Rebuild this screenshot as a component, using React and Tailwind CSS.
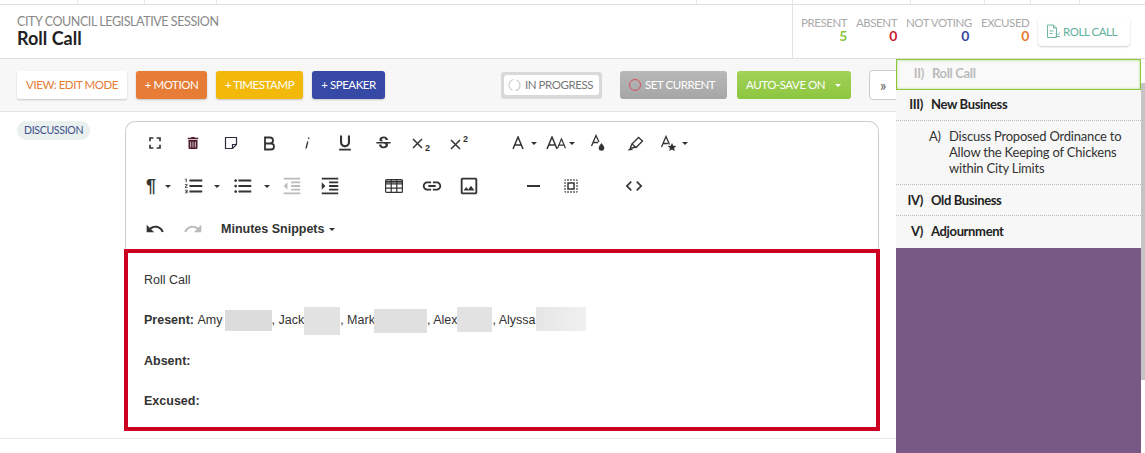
import {
  MdFullscreen, MdFormatUnderlined, MdStrikethroughS,
  MdFormatListNumbered, MdFormatListBulleted, MdFormatIndentDecrease, MdFormatIndentIncrease,
  MdLink, MdOutlineImage, MdSelectAll, MdCode, MdUndo, MdRedo,
} from 'react-icons/md';
import { FaTrashAlt } from 'react-icons/fa';

const tabStops = ['w-[78px]', 'w-[67px]', 'w-[72px]', 'w-[480px]', 'w-[96px]', 'w-[118px]', 'w-[74px]', 'w-[46px]', 'w-[49px]'];

const stats = [
  { label: 'PRESENT', value: 5, color: 'text-[#8cc63f]', width: 'w-[46px]' },
  { label: 'ABSENT', value: 0, color: 'text-[#c8202f]', width: 'w-[41px]' },
  { label: 'NOT VOTING', value: 0, color: 'text-[#3949a3]', width: 'w-[63px]' },
  { label: 'EXCUSED', value: 0, color: 'text-[#e67c36]', width: 'w-[48px] ml-[3px]' },
];

function Caret({ className = '' }) {
  return <span className={`inline-block shrink-0 border-x-[3px] border-t-[3px] border-x-transparent border-t-[#333] ${className}`}></span>;
}

function Btn({ children }) {
  return <div className="w-[38px] h-[24px] flex items-center justify-center shrink-0 text-[#333]">{children}</div>;
}

function NoteIcon() {
  return (
    <svg width="14" height="14" viewBox="0 0 14 14" fill="none" stroke="#2c2c3a" strokeWidth="1.2">
      <path d="M1.500 1.500h11v7l-4 4h-7z" />
      <path d="M12.500 8.500h-4v4" />
    </svg>
  );
}

function BoldIcon() {
  return (
    <svg width="13" height="15" viewBox="0 0 13 15" fill="none" stroke="#333" strokeWidth="1.800">
      <path d="M2 1.500h5a3 3 0 0 1 0 6H2zM2 7.500h6a3 3 0 0 1 0 6H2z" />
    </svg>
  );
}

function ItalicIcon() {
  return (
    <svg width="8" height="14" viewBox="0 0 8 14" fill="none" stroke="#333" strokeWidth="1.300">
      <path d="M5.800 1.500l-.2 1.500M4.800 5.500L3 12.500" />
    </svg>
  );
}

function ScriptIcon({ sup }) {
  return (
    <div className={`flex ${sup ? 'items-start' : 'items-end'} gap-[2px] h-[15px]`}>
      <svg width="11" height="11" viewBox="0 0 11 11" fill="none" stroke="#333" strokeWidth="1.500" className={sup ? 'mt-[3px]' : 'mb-[2px]'}>
        <path d="M1 1l9 9M10 1l-9 9" />
      </svg>
      <span className={`font-['Liberation_Sans',sans-serif] text-[9px] leading-[9px] font-bold tracking-normal ${sup ? '-mt-[1px]' : 'mb-[-2px]'}`}>2</span>
    </div>
  );
}

function LetterA({ size = 14, stroke = 1.500 }) {
  return (
    <svg width={size} height={size} viewBox="0 0 14 14" fill="none" stroke="#333" strokeWidth={stroke} className="shrink-0">
      <path d="M2 13L7 1l5 12M3.600 9h6.800" />
    </svg>
  );
}

function ColorIcon() {
  return (
    <svg width="16" height="18" viewBox="0 0 16 18" fill="none" stroke="#333" strokeWidth="1.300" className="shrink-0">
      <path d="M1.500 12L6 1.500 9 8M3 8.500h5" />
      <path d="M11.500 9c1.200 2 2.800 3.200 2.800 5a2.800 2.800 0 0 1-5.600 0c0-1.800 1.600-3 2.800-5z" fill="#333" stroke="none" />
    </svg>
  );
}

function MarkerIcon() {
  return (
    <svg width="17" height="15" viewBox="0 0 17 15" fill="none" stroke="#333" strokeWidth="1.300" className="shrink-0">
      <path d="M5 8l6.500-6.500 4 3.500-6.500 6.500z" />
      <path d="M5 8l-1.500 3 1.500 1 4-1" />
      <path d="M0.500 14.500l3-3 2.500 2.500z" fill="#333" stroke="none" />
    </svg>
  );
}

function StarAIcon() {
  return (
    <svg width="18" height="17" viewBox="0 0 18 17" fill="none" stroke="#333" strokeWidth="1.300" className="shrink-0">
      <path d="M1.500 12L6 1.500 9.500 9.500M3 8.500h5" />
      <path d="M12 8l1.300 2.800 3 .3-2.200 2 .7 3-2.800-1.600-2.800 1.600.7-3-2.200-2 3-.3z" fill="#333" stroke="none" />
    </svg>
  );
}

function TableIcon() {
  return (
    <svg width="18" height="14" viewBox="0 0 18 14" fill="none" stroke="#333" strokeWidth="1.200" className="shrink-0">
      <rect x="0.600" y="0.600" width="16.800" height="12.800" rx="1" />
      <path d="M0.600 4.800h16.800M0.600 9.200h16.800M6.200 0.600v12.800M11.800 0.600v12.800" />
      <path d="M0.600 2.700h16.800" strokeWidth="2" />
    </svg>
  );
}

function RollCallIcon() {
  return (
    <svg width="15" height="15" viewBox="0 0 15 15" fill="none" stroke="#5fb09a" strokeWidth="0.900">
      <path d="M1.500 1h6l3 3v9.500h-9z" />
      <path d="M7.500 1v3h3M3.500 7h4M3.500 9.500h3" />
      <path d="M10 9.500l1.500 1.500 2.500-2.500M9.500 12.500h4.500" />
    </svg>
  );
}

function Blur({ className }) {
  return <span className={`inline-block shrink-0 ${className}`}></span>;
}

function Toolbar() {
  const btn = 'h-[28px] rounded-[3px] shrink-0 shadow-[0_1px_2px_rgba(0,0,0,0.2)]';
  return (
    <div className="flex items-center gap-[9px] h-[53px] pl-[17px] bg-[#f7f7f7] border-b border-[#e2e2e2] overflow-hidden">
      <button className={`${btn} w-[110px] bg-white text-[#e67c36]`}>VIEW: EDIT MODE</button>
      <button className={`${btn} w-[71px] bg-[#e67c36] text-white`}>+ MOTION</button>
      <button className={`${btn} w-[87px] bg-[#f2b90a] text-white`}>+ TIMESTAMP</button>
      <button className={`${btn} w-[73px] bg-[#3649a4] text-white`}>+ SPEAKER</button>
      <div className="ml-[107px] w-[101px] h-[27px] rounded-[3px] bg-[#d9d9d9] p-[3px] shrink-0">
        <div className="h-[20px] rounded-[3px] bg-white text-[#777] flex items-center pl-[4px] gap-[4px]">
          <svg width="13" height="14" viewBox="0 0 13 14" fill="none" stroke="#ccc" strokeWidth="1.100">
            <path d="M5.500 1.500a5.500 5.500 0 0 0-1 10.500M7.500 12.500a5.500 5.500 0 0 0 1-10.500" />
          </svg>
          IN PROGRESS
        </div>
      </div>
      <button className="ml-[9px] w-[107px] h-[28px] rounded-[3px] bg-gradient-to-b from-[#b8b8b8] to-[#a6a6a6] text-white flex items-center pl-[9px] gap-[4px] shrink-0">
        <span className="w-[12px] h-[12px] rounded-full border border-[#d9505a]"></span>
        SET CURRENT
      </button>
      <button className="ml-px w-[114px] h-[28px] rounded-[3px] bg-gradient-to-b from-[#a2d158] to-[#8cc63f] text-white flex items-center justify-between pl-[9px] pr-[10px] shrink-0">
        AUTO-SAVE ON
        <span className="inline-block border-x-[3px] border-t-[3px] border-x-transparent border-t-white"></span>
      </button>
      <button className="ml-[9px] w-[34px] h-[30px] rounded-l-[4px] border border-[#ccc] bg-white text-[#555] text-[15px] pr-[6px] shrink-0">»</button>
    </div>
  );
}

function EditorToolbar() {
  return (
    <div className="flex flex-col pl-[10px] pt-[9px] text-[#333]">
      <div className="flex items-center h-[24px]">
        <Btn><MdFullscreen size={20} /></Btn>
        <Btn><FaTrashAlt size={12} className="text-[#4f1b2b]" /></Btn>
        <Btn><NoteIcon /></Btn>
        <Btn><BoldIcon /></Btn>
        <Btn><ItalicIcon /></Btn>
        <Btn><MdFormatUnderlined size={20} /></Btn>
        <Btn><MdStrikethroughS size={19} /></Btn>
        <Btn><ScriptIcon /></Btn>
        <Btn><ScriptIcon sup /></Btn>
        <div className="ml-[33px]"><LetterA /></div>
        <Caret className="ml-[6px]" />
        <div className="ml-[8px]"><LetterA /></div>
        <div className="ml-[-3px]"><LetterA size={11} /></div>
        <Caret className="ml-[2px]" />
        <div className="ml-[15px]"><ColorIcon /></div>
        <div className="ml-[21px]"><MarkerIcon /></div>
        <div className="ml-[16px]"><StarAIcon /></div>
        <Caret className="ml-[4px]" />
      </div>
      <div className="flex items-center h-[24px] mt-[19px]">
        <div className="ml-[10px] w-[19px] shrink-0 text-[18px] font-bold font-['Liberation_Sans',sans-serif] tracking-normal">¶</div>
        <Caret />
        <MdFormatListNumbered size={22} className="ml-[12px] shrink-0" />
        <Caret className="ml-[9px]" />
        <MdFormatListBulleted size={22} className="ml-[12px] shrink-0" />
        <Caret className="ml-[10px]" />
        <MdFormatIndentDecrease size={22} className="ml-[11px] shrink-0 text-[#bbb]" />
        <MdFormatIndentIncrease size={22} className="ml-[16px] shrink-0" />
        <div className="ml-[44px]"><TableIcon /></div>
        <MdLink size={22} className="ml-[18px] shrink-0" />
        <MdOutlineImage size={22} className="ml-[15px] shrink-0" />
        <span className="ml-[47px] w-[13px] h-[2px] bg-[#333] shrink-0"></span>
        <MdSelectAll size={18} className="ml-[22px] shrink-0" />
        <MdCode size={20} className="ml-[44px] shrink-0" />
      </div>
      <div className="flex items-center h-[24px] mt-[19px]">
        <Btn><MdUndo size={20} /></Btn>
        <Btn><MdRedo size={20} className="text-[#bbb]" /></Btn>
        <span className="ml-[9px] font-['Liberation_Sans',sans-serif] text-[12.500px] font-bold tracking-normal">Minutes Snippets</span>
        <Caret className="ml-[5px]" />
      </div>
    </div>
  );
}

function Editor() {
  return (
    <div className="flex-1 mt-[9px]">
      <div className="h-[129px] w-[754px] ml-px rounded-t-[10px] border border-b-0 border-[#ccc]">
        <EditorToolbar />
      </div>
      <div className="w-[756px] h-[182px] -mt-px border-4 border-[#ce0022] bg-white pl-[16px] pt-[19px] font-['Liberation_Sans',sans-serif] text-[12.500px] tracking-normal text-[#333] flex flex-col">
        <div className="h-[16px] leading-[16px]">Roll Call</div>
        <div className="flex items-center h-[16px] mt-[24.500px] whitespace-pre">
          <b>Present: </b>Amy<Blur className="ml-[2px] w-[47px] h-[21px] bg-[#dcdcdc]" />, Jack<Blur className="w-[36px] h-[28px] bg-[#e2e2e2]" />, Mark<Blur className="-ml-px w-[53px] h-[24px] bg-[#e0e0e0]" />, Alex<Blur className="w-[35px] h-[25px] bg-[#e2e2e2] -mt-[2px]" />, Alyssa<Blur className="w-[50px] h-[24px] bg-gradient-to-r from-[#e6e6e6] to-[#f0f0f0] -mt-[3px]" />
        </div>
        <div className="h-[16px] mt-[23px] font-bold">Absent:</div>
        <div className="h-[16px] mt-[24px] font-bold">Excused:</div>
      </div>
    </div>
  );
}

function AgendaRow({ num, children, active, nudge }) {
  return (
    <div className={`flex gap-[8px] items-center font-bold text-[13px] tracking-[-0.35px] h-[31px] ${active ? 'pb-px border border-[#8cc63f] shadow-[inset_0_0_3px_#b6dd84] bg-[#f9f9f9] text-[#bbb]' : 'border-b border-dotted border-[#bbb] text-[#222]'} ${nudge ? 'pt-px' : ''}`}>
      <span className="text-right w-[27px]">{num}</span>
      <span>{children}</span>
    </div>
  );
}

function Sidebar() {
  return (
    <div className="relative w-[249px] shrink-0 flex flex-col h-[394px] pr-[4px] bg-white">
      <div className="bg-[#f7f7f7] flex flex-col">
        <AgendaRow num="II)" active>Roll Call</AgendaRow>
        <AgendaRow num="III)">New Business</AgendaRow>
        <div className="flex gap-[8px] pl-[33px] pr-[10px] pt-[7px] h-[64px] border-b border-dotted border-[#bbb] text-[13px] tracking-[-0.2px] leading-[16px] text-[#333]">
          <span className="shrink-0 w-[12px]">A)</span>
          <span>Discuss Proposed Ordinance to Allow the Keeping of Chickens within City Limits</span>
        </div>
        <AgendaRow num="IV)" nudge>Old Business</AgendaRow>
        <div className="flex gap-[8px] items-center font-bold text-[13px] tracking-[-0.35px] h-[32px] text-[#222]">
          <span className="text-right w-[27px]">V)</span>
          <span>Adjournment</span>
        </div>
      </div>
      <div className="flex-1 bg-[#785885]"></div>
      <div className="absolute right-0 top-[24px] w-[4px] h-[297px] bg-[#c4c4c4]"></div>
    </div>
  );
}

export default function App() {
  return (
    <div className="w-[1145px] h-[453px] overflow-hidden bg-white font-['Lato',sans-serif] text-[11.500px] tracking-[-0.45px]">
      {/* tab strip */}
      <div className="flex h-[5px] border-b border-[#ddd]">
        {tabStops.map((w, i) => (
          <div key={i} className={`${w} border-r border-[#e8e8e8]`}></div>
        ))}
      </div>

      {/* header */}
      <div className="flex h-[54px] border-b border-[#e2e2e2]">
        <div className="w-[793px] pl-[17px] pt-[10px] border-r border-[#e2e2e2]">
          <div className="text-[12.500px] leading-[14px] text-[#888] tracking-[-0.42px]">CITY COUNCIL LEGISLATIVE SESSION</div>
          <div className="text-[18px] leading-[19px] font-bold text-[#222] tracking-normal">Roll Call</div>
        </div>
        <div className="flex flex-1 pl-[8px] pt-[11px] gap-[9px]">
          {stats.map((s) => (
            <div key={s.label} className={`text-right whitespace-nowrap ${s.width}`}>
              <div className="leading-[14px] text-[#aaa]">{s.label}</div>
              <div className={`text-[14px] leading-[12px] font-bold ${s.color}`}>{s.value}</div>
            </div>
          ))}
          <button className="mt-[1px] w-[92px] h-[29px] rounded-[4px] bg-white text-[#5fb09a] shadow-[0_1px_2px_rgba(0,0,0,0.2)] flex items-center pl-[8px] gap-[2px] shrink-0">
            <RollCallIcon />
            ROLL CALL
          </button>
        </div>
      </div>

      <div className="flex">
        <div className="w-[896px] shrink-0 overflow-hidden">
          <Toolbar />
          <div className="flex h-[327px] border-b border-[#e8e8e8]">
            <div className="w-[124px] shrink-0 pl-[17px] pt-[9px]">
              <span className="inline-block h-[19px] leading-[19px] px-[7px] rounded-full bg-[#e9f0ee] text-[#3c4f8c] text-[10.500px] tracking-[-0.3px]">DISCUSSION</span>
            </div>
            <Editor />
          </div>
        </div>
        <Sidebar />
      </div>
    </div>
  );
}
